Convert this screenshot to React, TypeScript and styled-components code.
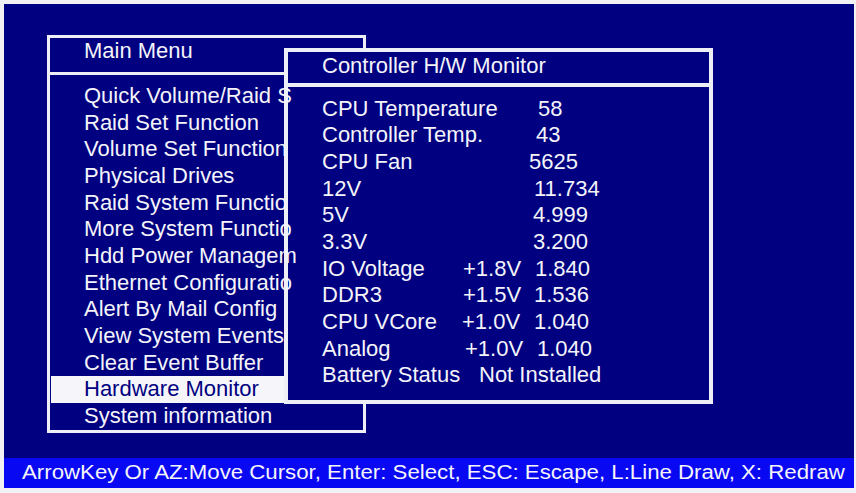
import styled, { createGlobalStyle } from 'styled-components';

const NAVY = '#000080';
const LINE = '#eeeef6';
const INK = '#f4f4fa';

const GlobalStyle = createGlobalStyle`
  html, body {
    margin: 0;
    padding: 0;
    background: #f2f2f4;
  }
  body {
    font-family: "Liberation Sans", Arial, sans-serif;
  }
`;

const Screen = styled.div`
  margin: 4px 0 0 4px;
  width: 850px;
  height: 484px;
  display: flex;
  flex-direction: column;
  background: ${NAVY};
  color: ${INK};
  font-size: 22px;
  overflow: hidden;
`;

const Desktop = styled.div`
  position: relative;
  flex: 1;
`;

const MenuWindow = styled.section`
  position: absolute;
  left: 43px;
  top: 31px;
  width: 319px;
  height: 398px;
  box-sizing: border-box;
  border: 3px solid ${LINE};
  display: flex;
  flex-direction: column;
`;

const MenuHeader = styled.header`
  height: 37px;
  box-sizing: border-box;
  border-bottom: 3px solid ${LINE};
  padding: 0 0 9px 34px;
  display: flex;
  align-items: center;
`;

const MenuList = styled.ul`
  list-style: none;
  margin: 0;
  padding: 8px 1px 0;
`;

const MenuItem = styled.li<{ $active?: boolean }>`
  height: 26.67px;
  line-height: 26.67px;
  padding-left: 33px;
  white-space: nowrap;
  background: ${(p) => (p.$active ? '#f6f6fa' : 'transparent')};
  color: ${(p) => (p.$active ? NAVY : INK)};
`;

/* the menu captions are drawn over the monitor window's frame */
const MenuLabel = styled.span`
  position: relative;
  z-index: 2;
`;

const MonitorWindow = styled.section`
  position: absolute;
  z-index: 1;
  left: 280px;
  top: 44px;
  width: 429px;
  height: 356px;
  box-sizing: border-box;
  border: 4px solid ${LINE};
  background: ${NAVY};
`;

const MonitorHeader = styled.header`
  height: 35px;
  box-sizing: border-box;
  border-bottom: 4px solid ${LINE};
  padding: 0 0 4px 34px;
  display: flex;
  align-items: center;
`;

const Readings = styled.div`
  padding: 8.6px 0 0 34px;
`;

const ReadingRow = styled.div`
  display: grid;
  grid-template-columns: 141px 70px 1fr;
  height: 26.7px;
  line-height: 26.7px;
  white-space: nowrap;
`;

const Cell = styled.span<{ $dx?: number; $col?: string }>`
  grid-column: ${(p) => p.$col ?? 'auto'};
  margin-left: ${(p) => p.$dx ?? 0}px;
`;

const StatusBar = styled.footer`
  height: 30px;
  box-sizing: border-box;
  padding: 1px 0 0 18px;
  background: #0808f2;
`;

const StatusText = styled.span`
  display: inline-block;
  font-size: 19.5px;
  line-height: 20px;
  white-space: nowrap;
  transform: scaleX(1.14);
  transform-origin: left center;
`;

const menuItems = [
  'Quick Volume/Raid S',
  'Raid Set Function',
  'Volume Set Function',
  'Physical Drives',
  'Raid System Functio',
  'More System Functio',
  'Hdd Power Managem',
  'Ethernet Configuratio',
  'Alert By Mail Config',
  'View System Events',
  'Clear Event Buffer',
  'Hardware Monitor',
  'System information',
];

type Reading = {
  label: string;
  nominal?: string;
  nominalDx?: number;
  value: string;
  valueDx?: number;
};

const readings: Reading[] = [
  { label: 'CPU Temperature', value: '58', valueDx: 5 },
  { label: 'Controller Temp.', value: '43', valueDx: 3 },
  { label: 'CPU Fan', value: '5625', valueDx: -4 },
  { label: '12V', value: '11.734', valueDx: 1 },
  { label: '5V', value: '4.999' },
  { label: '3.3V', value: '3.200' },
  { label: 'IO Voltage', nominal: '+1.8V', value: '1.840', valueDx: 2 },
  { label: 'DDR3', nominal: '+1.5V', value: '1.536', valueDx: 1 },
  { label: 'CPU VCore', nominal: '+1.0V', nominalDx: -1, value: '1.040', valueDx: 1 },
  { label: 'Analog', nominal: '+1.0V', nominalDx: 2, value: '1.040', valueDx: 4 },
];

export default function App() {
  return (
    <>
      <GlobalStyle />
      <Screen>
        <Desktop>
          <MenuWindow>
            <MenuHeader>Main Menu</MenuHeader>
            <MenuList>
              {menuItems.map((item) => (
                <MenuItem key={item} $active={item === 'Hardware Monitor'}>
                  <MenuLabel>{item}</MenuLabel>
                </MenuItem>
              ))}
            </MenuList>
          </MenuWindow>

          <MonitorWindow>
            <MonitorHeader>Controller H/W Monitor</MonitorHeader>
            <Readings>
              {readings.map((r) => (
                <ReadingRow key={r.label}>
                  <Cell>{r.label}</Cell>
                  <Cell $col="2" $dx={r.nominalDx}>
                    {r.nominal}
                  </Cell>
                  <Cell $col="3" $dx={r.valueDx}>
                    {r.value}
                  </Cell>
                </ReadingRow>
              ))}
              <ReadingRow>
                <Cell>Battery Status</Cell>
                <Cell $col="2 / 4" $dx={16}>
                  Not Installed
                </Cell>
              </ReadingRow>
            </Readings>
          </MonitorWindow>
        </Desktop>
        <StatusBar>
          <StatusText>
            ArrowKey Or AZ:Move Cursor, Enter: Select, ESC: Escape, L:Line Draw, X: Redraw
          </StatusText>
        </StatusBar>
      </Screen>
    </>
  );
}
